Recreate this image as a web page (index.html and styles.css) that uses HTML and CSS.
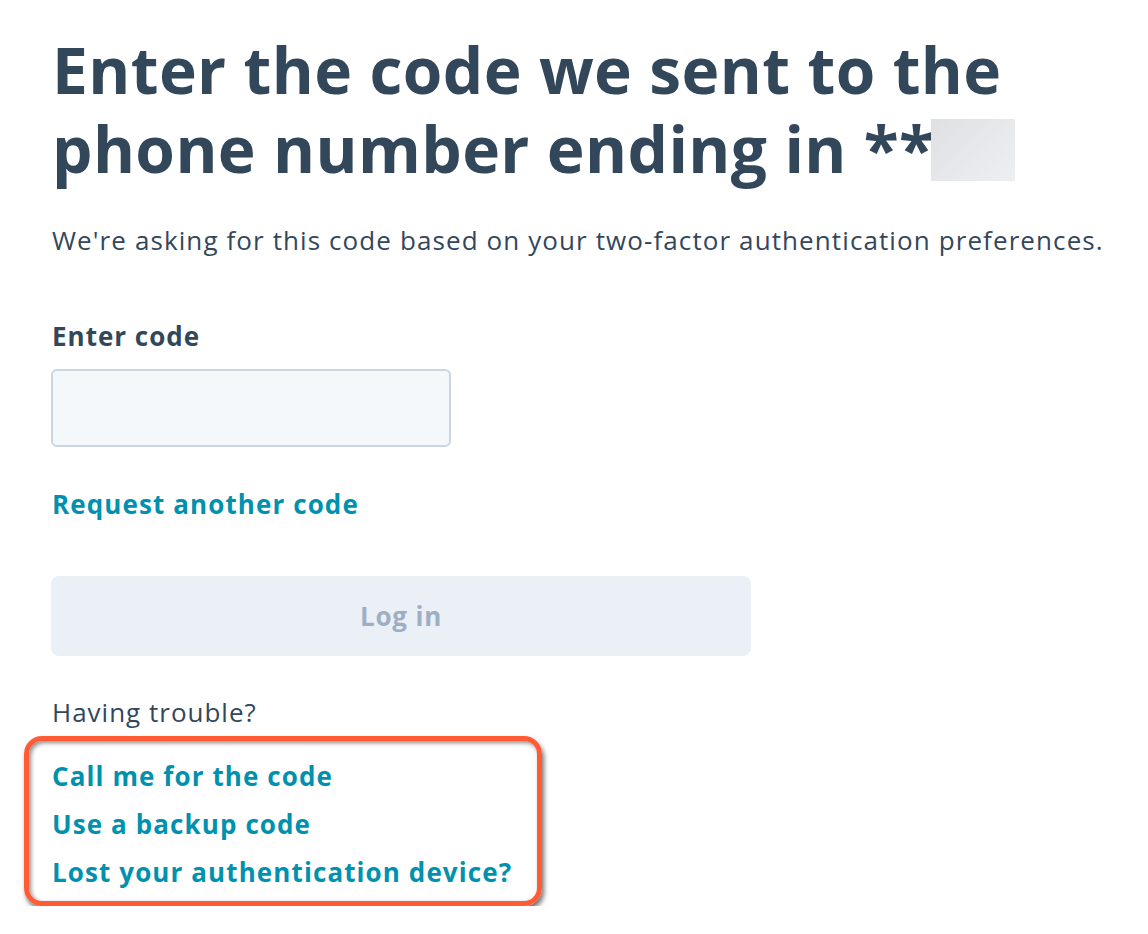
FILE: index.html
```html
<!DOCTYPE html>
<html lang="en">
<head>
<meta charset="utf-8">
<title>Two-factor authentication</title>
<link rel="stylesheet" href="styles.css">
</head>
<body>
<main class="page">
  <h1 class="title">Enter the code we sent to the phone number ending in **<span class="redact"></span></h1>
  <p class="intro">We're asking for this code based on your two-factor authentication preferences.</p>
  <label class="label" for="code">Enter code</label>
  <input class="input" id="code" type="text">
  <a class="link request" href="#">Request another code</a>
  <button class="btn" type="button" disabled>Log in</button>
  <p class="trouble">Having trouble?</p>
  <div class="highlight">
    <a class="link opt" href="#">Call me for the code</a>
    <a class="link opt" href="#">Use a backup code</a>
    <a class="link opt" href="#">Lost your authentication device?</a>
  </div>
</main>
</body>
</html>
```

FILE: styles.css
```css
html, body {
  margin: 0;
  padding: 0;
  background: #ffffff;
}
body {
  font-family: "Open Sans", "Lato", sans-serif;
  color: #33475b;
}
.page {
  display: flex;
  flex-direction: column;
  align-items: flex-start;
  padding: 30px 0 0 52px;
}
.title {
  margin: 0;
  font-size: 64px;
  line-height: 79px;
  font-weight: 700;
  width: 1000px;
  letter-spacing: 0.4px;
}
.redact {
  display: inline-block;
  width: 84px;
  height: 62px;
  margin-left: -3px;
  vertical-align: -8px;
  background: linear-gradient(135deg, #dfe0e3, #eeeff1);
}
.intro {
  margin: 36px 0 0;
  font-size: 26px;
  line-height: 32px;
  letter-spacing: 1.1px;
}
.label {
  margin-top: 64px;
  font-size: 26px;
  line-height: 32px;
  font-weight: 700;
  letter-spacing: 1px;
}
.input {
  margin: 17px 0 0 -1px;
  width: 400px;
  height: 78px;
  box-sizing: border-box;
  border: 2px solid #cbd6e2;
  border-radius: 6px;
  background: #f5f8fa;
}
.link {
  color: #0091ae;
  font-weight: 700;
  font-size: 26px;
  line-height: 32px;
  letter-spacing: 1.1px;
  text-decoration: none;
}
.request {
  margin-top: 41px;
}
.btn {
  margin: 56px 0 0 -1px;
  width: 700px;
  height: 80px;
  border: 0;
  border-radius: 8px;
  background: #eaf0f6;
  color: #9eafc5;
  font-family: inherit;
  font-size: 26px;
  font-weight: 700;
  letter-spacing: 0.8px;
}
.trouble {
  margin: 40px 0 0;
  font-size: 26px;
  line-height: 32px;
  letter-spacing: 1px;
}
.highlight {
  margin: 8px 0 0 -28px;
  width: 518px;
  box-sizing: border-box;
  padding: 19px 0 13px 23px;
  border: 5px solid #ff5c35;
  border-radius: 18px;
  display: flex;
  flex-direction: column;
  gap: 16px;
  box-shadow: inset 2px 2px 4px rgba(0,0,0,0.45), 2px 4px 5px rgba(0,0,0,0.55);
}
```
